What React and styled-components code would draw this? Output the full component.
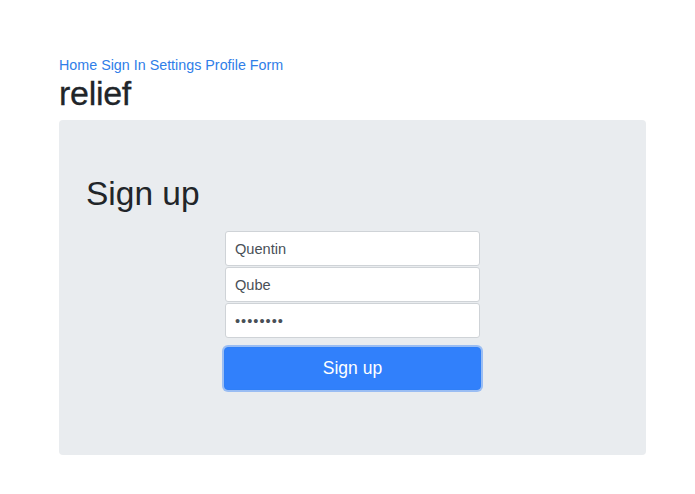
import React from "react";
import styled, { createGlobalStyle } from "styled-components";

const GlobalStyle = createGlobalStyle`
    body {
        margin: 0;
        background: #fff;
        font-family: "Liberation Sans", Arial, sans-serif;
        color: #212529;
    }
`

const Container = styled.div`
    width: 587px;
    margin: 0 0 0 59px;
    padding-top: 57px;
    box-sizing: border-box;
`

const Nav = styled.nav`
    display: flex;
    gap: 4px;
    font-size: 14.3px;
    line-height: 17px;
`

const NavLink = styled.a`
    color: #2f7ee8;
    text-decoration: none;
`

const Brand = styled.h1`
    margin: 0;
    font-size: 34px;
    font-weight: 500;
    line-height: 38px;
    letter-spacing: -0.3px;
    padding-bottom: 8px;
    -webkit-text-stroke: 0.3px #212529;
`

const Jumbotron = styled.div`
    background: #e9ecef;
    border-radius: 4px;
    height: 335px;
    padding: 54px 27px 0;
    box-sizing: border-box;
`

const Heading = styled.h2`
    margin: 0 0 17px;
    font-size: 33.5px;
    font-weight: 400;
    line-height: 40px;
`

const Form = styled.form`
    width: 257px;
    margin: 0 auto;
    display: flex;
    flex-direction: column;
    gap: 1px;
`

const Input = styled.input`
    box-sizing: border-box;
    width: 255px;
    height: 35px;
    margin: 0 1px;
    border: 1px solid #cfd3d7;
    border-radius: 3px;
    background: #fff;
    padding: 0 9px;
    font-family: "Liberation Sans", Arial, sans-serif;
    font-size: 14.6px;
    color: #495057;
    letter-spacing: ${p => (p.type === "password" ? "1px" : "0")};
    outline: none;
`

const Button = styled.button`
    margin-top: 8px;
    height: 43px;
    width: 257px;
    box-sizing: border-box;
    border: 1px solid #2f7ff7;
    border-radius: 4px;
    background: #3180fb;
    box-shadow: 0 0 0 2px rgba(120, 170, 245, 0.7);
    color: #fff;
    font-family: "Liberation Sans", Arial, sans-serif;
    font-size: 17.5px;
    cursor: pointer;
`

export default function App() {
    return (
        <>
            <GlobalStyle />
            <Container>
                <Nav>
                    <NavLink href="#">Home</NavLink>
                    <NavLink href="#">Sign In</NavLink>
                    <NavLink href="#">Settings</NavLink>
                    <NavLink href="#">Profile</NavLink>
                    <NavLink href="#">Form</NavLink>
                </Nav>
                <Brand>relief</Brand>
                <Jumbotron>
                    <Heading>Sign up</Heading>
                    <Form onSubmit={e => e.preventDefault()}>
                        <Input type="text" defaultValue="Quentin" />
                        <Input type="text" defaultValue="Qube" />
                        <Input type="password" defaultValue="password" />
                        <Button type="submit">Sign up</Button>
                    </Form>
                </Jumbotron>
            </Container>
        </>
    )
}
